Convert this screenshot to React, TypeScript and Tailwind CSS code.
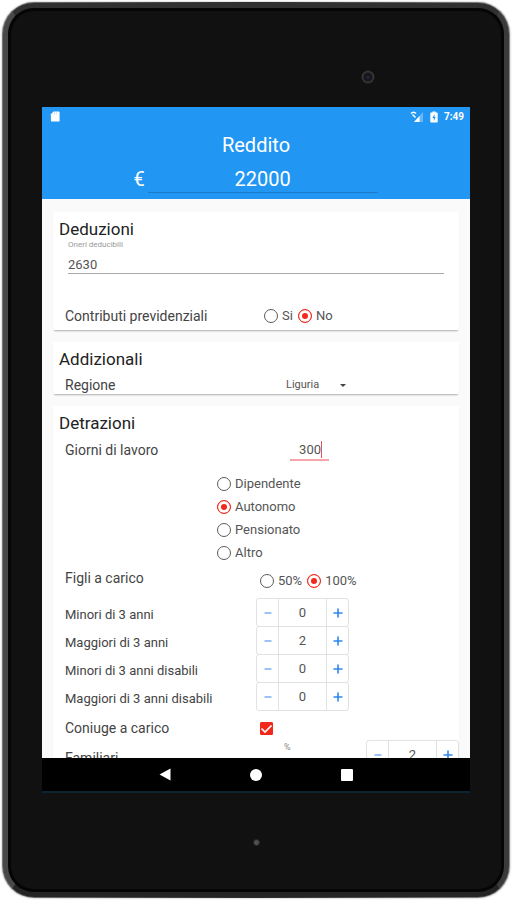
import React, { useState } from 'react';

function Radio({ name, label, defaultChecked }: { name: string; label: string; defaultChecked?: boolean }) {
  return (
    <label className="flex items-center gap-1 text-[13px] leading-4 text-[#555]">
      <input
        type="radio"
        name={name}
        defaultChecked={defaultChecked}
        className="h-[14px] w-[14px] shrink-0 appearance-none rounded-full border border-[#5c5c5c] bg-white checked:border-[#f3281c] checked:bg-[#f3281c] checked:shadow-[inset_0_0_0_3px_white]"
      />
      {label}
    </label>
  );
}

function Stepper({ id, initial }: { id: string; initial: number }) {
  const [value, setValue] = useState(initial);
  return (
    <div className="flex h-[29px] w-[93px] rounded-[3px] border border-[#e2e2e2] bg-white">
      <button
        type="button"
        aria-label="Meno"
        className="flex w-[21px] items-center justify-center"
        onClick={() => setValue(Math.max(0, value - 1))}
      >
        <svg viewBox="0 0 8 8" className="h-2 w-2">
          <path d="M0.5 4h7" stroke="#6fa9f3" strokeWidth="1.4" />
        </svg>
      </button>
      <input
        id={id}
        type="text"
        inputMode="numeric"
        value={value}
        onChange={(e) => setValue(Number(e.target.value) || 0)}
        className="min-w-0 flex-1 border-x border-[#e2e2e2] text-center text-[13px] text-[#555] outline-none"
      />
      <button
        type="button"
        aria-label="Più"
        className="flex w-[21px] items-center justify-center"
        onClick={() => setValue(value + 1)}
      >
        <svg viewBox="0 0 10 10" className="h-[10px] w-[10px]">
          <path d="M0.5 5h9M5 0.5v9" stroke="#2f86ee" strokeWidth="1.6" />
        </svg>
      </button>
    </div>
  );
}

function Card({ title, children }: { title: string; children: React.ReactNode }) {
  return (
    <section className="rounded-[2px] bg-white shadow-[0_2px_2px_-1px_rgba(0,0,0,0.3)]">
      <h2 className="px-[6px] pt-1 text-[17px] leading-[26px] text-[#222]">{title}</h2>
      {children}
    </section>
  );
}

const dependents = [
  { id: 'minori', label: 'Minori di 3 anni', value: 0 },
  { id: 'maggiori', label: 'Maggiori di 3 anni', value: 2 },
  { id: 'minori-disabili', label: 'Minori di 3 anni disabili', value: 0 },
  { id: 'maggiori-disabili', label: 'Maggiori di 3 anni disabili', value: 0 },
];

function StatusBar() {
  return (
    <div className="flex h-[19px] items-center justify-between pr-[6px] pl-2">
      <svg viewBox="0 0 10 12" className="h-[11px] w-[10px]" fill="white">
        <path d="M3.5 0.5H9a1 1 0 0 1 1 1v9a1 1 0 0 1-1 1H1.500a1 1 0 0 1-1-1V3.500z" />
        <path d="M4.500 1.500v2M6.500 1.500v2" stroke="#9fd0fb" strokeWidth="0.800" />
      </svg>
      <div className="flex items-center gap-[6px] text-[10px] leading-3 font-bold text-white">
        <svg viewBox="0 0 14 12" className="h-3 w-[14px]">
          <path d="M13 1v10H4z" fill="#6bb8f8" />
          <path d="M9.500 5v6H4z" fill="white" />
          <path d="M1 2.500c1.500-1.500 3.500-1.500 5 0M2.500 3.500l3 3" fill="none" stroke="white" strokeWidth="1.600" />
        </svg>
        <svg viewBox="0 0 8 12" className="h-3 w-2">
          <path d="M2.500 0.500h3v1H7a0.700 0.700 0 0 1 0.700 0.700v8.600a0.700 0.700 0 0 1-0.700 0.700H1a0.700 0.700 0 0 1-0.700-0.700V2.200A0.700 0.700 0 0 1 1 1.500h1.500z" fill="white" />
          <path d="M4.500 3L2.500 7h1.300v3L5.700 6H4.500z" fill="#2196f3" />
        </svg>
        <span>7:49</span>
      </div>
    </div>
  );
}

export default function App() {
  return (
    <div className="h-screen bg-white p-[2px] font-[Roboto,sans-serif]">
      {/* Tablet shell */}
      <div className="h-full rounded-[32px] bg-gradient-to-r from-[#777] via-[#2b2b2b] to-[#888] p-px shadow-[0_0_2px_#999]">
        <div className="h-full rounded-[31px] border-x-[5px] border-y-[5px] border-t-[#303030] border-r-[#3a3a3a] border-b-[#242424] border-l-[#484848] bg-[#050505] p-[3px]">
          <div className="flex h-full flex-col rounded-[23px] bg-[#111] px-[31px]">
            <div className="flex h-[96px] shrink-0 items-center justify-end pt-[36px] pr-[95px]">
              <svg viewBox="0 0 14 14" className="h-[14px] w-[14px]">
                <circle cx="7" cy="7" r="5.500" fill="#171719" stroke="#343436" strokeWidth="2" />
                <circle cx="7" cy="7.500" r="1.500" fill="#25234a" />
              </svg>
            </div>

            {/* Screen */}
            <main className="flex min-h-0 flex-1 flex-col border-b-2 border-[#0b2430] bg-[#fafafa]">
              <header className="h-[92px] shrink-0 bg-[#2196f3] text-white">
                <StatusBar />
                <label htmlFor="reddito" className="block pt-[7px] text-center text-[20px] leading-6">
                  Reddito
                </label>
                <div className="flex justify-center pt-[8px] pr-px text-[20px] leading-7">
                  <span className="pr-[3px]">€</span>
                  <input
                    id="reddito"
                    type="text"
                    defaultValue="22000"
                    className="h-[28px] w-[230px] border-b border-[#1b7ccb] bg-transparent text-center outline-none"
                  />
                </div>
              </header>

              <form className="flex min-h-0 flex-1 flex-col gap-3 overflow-y-auto px-[11px] pt-[13px] [scrollbar-width:none]">
                <Card title="Deduzioni">
                  <div className="-mt-1 px-[15px]">
                    <label htmlFor="oneri" className="block pt-px text-[8px] leading-[12px] text-[#999]">
                      Oneri deducibili
                    </label>
                    <input
                      id="oneri"
                      type="text"
                      defaultValue="2630"
                      className="block h-[23px] w-full border-b border-[#aaa] pt-1 text-[13px] text-[#555] outline-none"
                    />
                  </div>
                  <div role="radiogroup" aria-labelledby="contributi-label" className="grid grid-cols-2 items-center pt-[32px] pb-1">
                    <span id="contributi-label" className="pl-3 text-[14px] leading-5 text-[#444]">
                      Contributi previdenziali
                    </span>
                    <div className="flex gap-[5px] pl-2">
                      <Radio name="contributi" label="Si" />
                      <Radio name="contributi" label="No" defaultChecked />
                    </div>
                  </div>
                </Card>

                <Card title="Addizionali">
                  <div className="grid grid-cols-2 items-center pt-1">
                    <label htmlFor="regione" className="pl-3 text-[14px] leading-[18px] text-[#444]">
                      Regione
                    </label>
                    <div className="flex items-center pl-[30px]">
                      <select
                        id="regione"
                        className="w-[54px] appearance-none bg-transparent text-[11px] leading-4 text-[#555] outline-none"
                      >
                        <option>Liguria</option>
                        <option>Lombardia</option>
                      </select>
                      <svg viewBox="0 0 6 3" className="h-[3px] w-[6px]">
                        <path d="M0 0h6L3 3z" fill="#444" />
                      </svg>
                    </div>
                  </div>
                </Card>

                <Card title="Detrazioni">
                  <div className="grid grid-cols-2 items-center pt-[2px]">
                    <label htmlFor="giorni" className="pl-3 text-[14px] leading-6 text-[#444]">
                      Giorni di lavoro
                    </label>
                    <div className="pl-[34px]">
                      <div className="flex w-[39px] items-center border-b-2 border-[#f5a5ab] pr-[7px]">
                        <input
                          id="giorni"
                          type="text"
                          defaultValue="300"
                          className="h-5 w-full min-w-0 text-right text-[13px] text-[#555] outline-none"
                        />
                        <span className="h-[17px] w-px shrink-0 bg-[#f0505c]" />
                      </div>
                    </div>
                  </div>

                  <div className="flex flex-col gap-[7px] pt-[14px] pl-[164px]">
                    <Radio name="lavoro" label="Dipendente" />
                    <Radio name="lavoro" label="Autonomo" defaultChecked />
                    <Radio name="lavoro" label="Pensionato" />
                    <Radio name="lavoro" label="Altro" />
                  </div>

                  <div className="grid grid-cols-2 pt-[7px]">
                    <span className="pl-3 text-[14px] leading-5 text-[#444]">Figli a carico</span>
                    <div className="flex gap-[5px] pt-[5px] pl-1">
                      <Radio name="figli" label="50%" />
                      <Radio name="figli" label="100%" defaultChecked />
                    </div>
                  </div>

                  <div className="pt-[9px]">
                    {dependents.map((row) => (
                      <div key={row.id} className="-mb-px grid grid-cols-2 items-center">
                        <label htmlFor={row.id} className="pt-[5px] pl-3 text-[13px] leading-5 text-[#444]">
                          {row.label}
                        </label>
                        <Stepper id={row.id} initial={row.value} />
                      </div>
                    ))}
                  </div>

                  <div className="grid grid-cols-2 items-center pt-2">
                    <label htmlFor="coniuge" className="pl-3 text-[14px] leading-5 text-[#444]">
                      Coniuge a carico
                    </label>
                    <div className="relative ml-1 h-[13px] w-[13px]">
                      <input
                        id="coniuge"
                        type="checkbox"
                        defaultChecked
                        className="peer block h-[13px] w-[13px] appearance-none rounded-[1px] border border-[#5c5c5c] checked:border-[#f3281c] checked:bg-[#f3281c]"
                      />
                      <svg viewBox="0 0 13 13" className="pointer-events-none absolute inset-0 hidden peer-checked:block">
                        <path d="M1.500 6.500l3.500 3.500 6.500-6.500" fill="none" stroke="white" strokeWidth="1.600" />
                      </svg>
                    </div>
                  </div>

                  <div className="flex items-start pb-3">
                    <label htmlFor="familiari" className="w-1/2 pt-[10px] pl-3 text-[14px] leading-5 text-[#444]">
                      Familiari
                    </label>
                    <span className="flex-1 pt-1 pl-7 text-[9px] leading-[10px] text-[#888]">%</span>
                    <div className="pt-[2px]">
                      <Stepper id="familiari" initial={2} />
                    </div>
                  </div>
                </Card>
              </form>

              <nav className="flex h-[33px] shrink-0 items-center justify-center gap-[79px] bg-black">
                <button type="button" aria-label="Indietro">
                  <svg viewBox="0 0 12 13" className="h-[13px] w-3">
                    <path d="M11.500 0.500v12L0.500 6.500z" fill="white" />
                  </svg>
                </button>
                <button type="button" aria-label="Home" className="h-3 w-3 rounded-full bg-white" />
                <button type="button" aria-label="Recenti" className="h-3 w-3 rounded-[1px] bg-white" />
              </nav>
            </main>

            <div className="flex h-[96px] shrink-0 justify-center pt-[46px]">
              <span className="h-[7px] w-[7px] rounded-full border border-[#242424] bg-[#505050]" />
            </div>
          </div>
        </div>
      </div>
    </div>
  );
}
